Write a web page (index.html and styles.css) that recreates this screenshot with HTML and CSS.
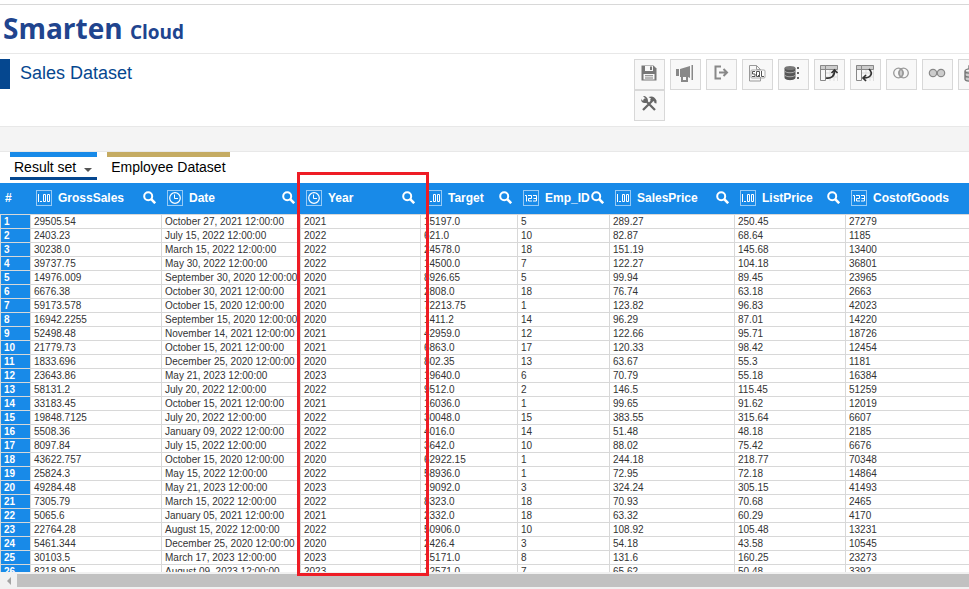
FILE: index.html
```html
<!DOCTYPE html>
<html lang="en">
<head>
<meta charset="utf-8">
<title>Smarten Cloud - Sales Dataset</title>
<link rel="stylesheet" href="styles.css">
</head>
<body>
<svg class="defs" aria-hidden="true">
  <symbol id="search" viewBox="0 0 13 13"><circle cx="5.2" cy="5.2" r="4" fill="none" stroke="currentColor" stroke-width="2"/><path d="M8.2 8.2l4 4" stroke="currentColor" stroke-width="2.6"/></symbol>
  <symbol id="decimal" viewBox="0 0 16 16"><g fill="none" stroke="currentColor"><rect x=".5" y=".5" width="15" height="15" stroke-opacity=".55"/><path d="M2.500 4v8M4 11.500h2M7.500 4.500h2v7h-2zM11.500 4.500h2v7h-2z"/></g></symbol>
  <symbol id="integer" viewBox="0 0 16 16"><g fill="none" stroke="currentColor"><rect x=".5" y=".5" width="15" height="15" stroke-opacity=".55"/><path d="M2 5.500h1.500v6M5 5.500h3.500v3h-3v2.500h3.500M10 5.500h3.500v5.500h-3.500M10.500 8.500h3"/></g></symbol>
  <symbol id="clock" viewBox="0 0 16 16"><g fill="none" stroke="currentColor"><rect x=".5" y=".5" width="15" height="15" stroke-opacity=".55"/><circle cx="8" cy="8" r="5.300" stroke-width="1.200"/><path d="M7.500 4.500v4h3.500"/></g></symbol>
</svg>
<header class="brand"><a class="logo" href="#">Smarten <span>Cloud</span></a></header>
<section class="titlebar">
  <h1>Sales Dataset</h1>
  <div class="toolbar">
    <button type="button" aria-label="Save"><svg viewBox="0 0 20 20"><path d="M2.500 2.500h12l3 3v12h-15z" fill="#777"/><path d="M6 3h8v5H6zM4.500 11h11v5.500h-11z" fill="#f8f8f8"/><path d="M11 3.500h2v3.500h-2zM6 12.200h8v1H6zM6 14.500h8v1H6z" fill="#777"/></svg></button>
    <button type="button" aria-label="Announce"><svg viewBox="0 0 20 20"><path d="M1 6h3v7H1zM5 6l10-3v12l-2-1v5H6v-5H5zM16.500 2H18v15h-1.500z" fill="#888"/><path d="M8 14h3v3H8z" fill="#f8f8f8"/></svg></button>
    <button type="button" aria-label="Export"><svg viewBox="0 0 20 20"><path d="M10 3.500H4.500v12H10M8 9.500h8M12.500 6l3.500 3.500-3.500 3.500" fill="none" stroke="#888" stroke-width="2"/></svg></button>
    <button type="button" aria-label="SQL"><svg viewBox="0 0 20 20"><path d="M2.500 18V2.500h7l4 4V18z" fill="none" stroke="#999"/><path d="M9.500 2.500v4h4" fill="none" stroke="#999"/><rect x="4" y="7" width="14" height="8" rx="1" fill="#fff" stroke="#aaa"/><path d="M8 8.500H5.500V11H8v2.500H5M9.500 8.500h3v5h-3zM11 12l2.500 2.500M14.500 8v5.500H17" fill="none" stroke="#555"/></svg></button>
    <button type="button" aria-label="Data source"><svg viewBox="0 0 20 20"><path d="M1.500 5v9.500c0 3.500 11 3.500 11 0V5z" fill="#555"/><ellipse cx="7" cy="5" rx="5.500" ry="2" fill="#777"/><path d="M1.500 7.500c0 3 11 3 11 0M1.500 11.500c0 3 11 3 11 0" fill="none" stroke="#aaa"/><path d="M14 5h3M14 10h3M14 15h3" stroke="#333" stroke-width="1.500" stroke-dasharray="2 1"/></svg></button>
    <button type="button" aria-label="Move rows up"><svg viewBox="0 0 20 20"><path d="M1 2h18v4H1z" fill="#ccc"/><path d="M7 10h12M7 14h12M11 6v12M15 6v12M18.500 6v12" stroke="#ddd"/><path d="M1.500 2.500h5v15h-5zM1.500 6.500h17M6.500 2.500h12v4" fill="none" stroke="#888"/><path d="M7 15c5 1 9-2 8.500-8M12.500 10l3-3 3 3" fill="none" stroke="#333" stroke-width="1.700"/></svg></button>
    <button type="button" aria-label="Move rows down"><svg viewBox="0 0 20 20"><path d="M1 2h18v4H1z" fill="#ccc"/><path d="M7 10h12M7 14h12M11 6v12M15 6v12M18.500 6v12" stroke="#ddd"/><path d="M1.500 2.500h5v15h-5zM1.500 6.500h17M6.500 2.500h12v4" fill="none" stroke="#888"/><path d="M14 6c5 5 1 9-5 9M11 12l-3 3 3 3" fill="none" stroke="#333" stroke-width="1.700"/></svg></button>
    <button type="button" aria-label="Join"><svg viewBox="0 0 20 20"><g fill="none" stroke="#999" stroke-width="1.300"><circle cx="7.500" cy="10" r="4.800"/><circle cx="12.500" cy="10" r="4.800"/><path d="M10 6c2.500 2 2.500 6 0 8-2.500-2-2.500-6 0-8z" fill="#ccc"/></g></svg></button>
    <button type="button" aria-label="Union"><svg viewBox="0 0 20 20"><g fill="#ccc" stroke="#888" stroke-width="1.200"><circle cx="6" cy="10" r="3.700"/><circle cx="14" cy="10" r="3.700"/></g></svg></button>
    <button type="button" aria-label="Load data"><svg viewBox="0 0 20 20"><path d="M2 8v8c0 3 13 3 13 0V8z" fill="#ccc"/><path d="M2 8v8c0 3 13 3 13 0V8M2 8c0 3 13 3 13 0s-13-3-13 0M2 12c0 3 13 3 13 0M6 6V3h4" fill="none" stroke="#777" stroke-width="1.400"/></svg></button>
    <button type="button" aria-label="Tools"><svg viewBox="0 0 20 20"><path d="M5 5l11 11M13 7L4 16" stroke="#666" stroke-width="2.300"/><path d="M4 2l2.500 2.500-1 1.500L3 6.500 2 4.500c0 4 2 5 5 4.500l2-2c0-3-2-5-5-5zM9.500 3c4-1.500 6 0 8 3.500v3l-2-.5-.5-2-2 1-2-2 1-1.500z" fill="#666"/></svg></button>
  </div>
</section>
<div class="strip"></div>
<nav class="tabs">
  <button type="button" class="tab active">Result set <i class="caret"></i></button>
  <button type="button" class="tab">Employee Dataset</button>
</nav>
<main class="grid">
  <div class="viewport">
  <table>
    <colgroup><col class="c-num"><col class="c-gross"><col class="c-date"><col class="c-year"><col class="c-target"><col class="c-emp"><col class="c-sales"><col class="c-list"><col class="c-cost"></colgroup>
    <thead><tr>
      <th>#</th>
      <th><div class="head"><svg><use href="#decimal"/></svg><span>GrossSales</span><button type="button" aria-label="Search GrossSales"><svg><use href="#search"/></svg></button></div></th>
      <th><div class="head"><svg><use href="#clock"/></svg><span>Date</span><button type="button" aria-label="Search Date"><svg><use href="#search"/></svg></button></div></th>
      <th><div class="head"><svg><use href="#clock"/></svg><span>Year</span><button type="button" aria-label="Search Year"><svg><use href="#search"/></svg></button></div></th>
      <th><div class="head"><svg><use href="#decimal"/></svg><span>Target</span><button type="button" aria-label="Search Target"><svg><use href="#search"/></svg></button></div></th>
      <th><div class="head"><svg><use href="#integer"/></svg><span>Emp_ID</span><button type="button" aria-label="Search Emp_ID"><svg><use href="#search"/></svg></button></div></th>
      <th><div class="head"><svg><use href="#decimal"/></svg><span>SalesPrice</span><button type="button" aria-label="Search SalesPrice"><svg><use href="#search"/></svg></button></div></th>
      <th><div class="head"><svg><use href="#decimal"/></svg><span>ListPrice</span><button type="button" aria-label="Search ListPrice"><svg><use href="#search"/></svg></button></div></th>
      <th><div class="head"><svg><use href="#integer"/></svg><span>CostofGoods</span></div></th>
    </tr></thead>
    <tbody>
      <tr><th>1<td>29505.54<td>October 27, 2021 12:00:00<td>2021<td>15197.0<td>5<td>289.27<td>250.45<td>27279
      <tr><th>2<td>2403.23<td>July 15, 2022 12:00:00<td>2022<td>621.0<td>10<td>82.87<td>68.64<td>1185
      <tr><th>3<td>30238.0<td>March 15, 2022 12:00:00<td>2022<td>24578.0<td>18<td>151.19<td>145.68<td>13400
      <tr><th>4<td>39737.75<td>May 30, 2022 12:00:00<td>2022<td>14500.0<td>7<td>122.27<td>104.18<td>36801
      <tr><th>5<td>14976.009<td>September 30, 2020 12:00:00<td>2020<td>8926.65<td>5<td>99.94<td>89.45<td>23965
      <tr><th>6<td>6676.38<td>October 30, 2021 12:00:00<td>2021<td>2808.0<td>18<td>76.74<td>63.18<td>2663
      <tr><th>7<td>59173.578<td>October 15, 2020 12:00:00<td>2020<td>72213.75<td>1<td>123.82<td>96.83<td>42023
      <tr><th>8<td>16942.2255<td>September 15, 2020 12:00:00<td>2020<td>1411.2<td>14<td>96.29<td>87.01<td>14220
      <tr><th>9<td>52498.48<td>November 14, 2021 12:00:00<td>2021<td>42959.0<td>12<td>122.66<td>95.71<td>18726
      <tr><th>10<td>21779.73<td>October 15, 2021 12:00:00<td>2021<td>6863.0<td>17<td>120.33<td>98.42<td>12454
      <tr><th>11<td>1833.696<td>December 25, 2020 12:00:00<td>2020<td>802.35<td>13<td>63.67<td>55.3<td>1181
      <tr><th>12<td>23643.86<td>May 21, 2023 12:00:00<td>2023<td>19640.0<td>6<td>70.79<td>55.18<td>16384
      <tr><th>13<td>58131.2<td>July 20, 2022 12:00:00<td>2022<td>9512.0<td>2<td>146.5<td>115.45<td>51259
      <tr><th>14<td>33183.45<td>October 15, 2021 12:00:00<td>2021<td>16036.0<td>1<td>99.65<td>91.62<td>12019
      <tr><th>15<td>19848.7125<td>July 20, 2022 12:00:00<td>2022<td>30048.0<td>15<td>383.55<td>315.64<td>6607
      <tr><th>16<td>5508.36<td>January 09, 2022 12:00:00<td>2022<td>4016.0<td>14<td>51.48<td>48.18<td>2185
      <tr><th>17<td>8097.84<td>July 15, 2022 12:00:00<td>2022<td>3642.0<td>10<td>88.02<td>75.42<td>6676
      <tr><th>18<td>43622.757<td>October 15, 2020 12:00:00<td>2020<td>62922.15<td>1<td>244.18<td>218.77<td>70348
      <tr><th>19<td>25824.3<td>May 15, 2022 12:00:00<td>2022<td>58936.0<td>1<td>72.95<td>72.18<td>14864
      <tr><th>20<td>49284.48<td>May 21, 2023 12:00:00<td>2023<td>19092.0<td>3<td>324.24<td>305.15<td>41493
      <tr><th>21<td>7305.79<td>March 15, 2022 12:00:00<td>2022<td>8323.0<td>18<td>70.93<td>70.68<td>2465
      <tr><th>22<td>5065.6<td>January 05, 2021 12:00:00<td>2021<td>2332.0<td>18<td>63.32<td>60.29<td>4170
      <tr><th>23<td>22764.28<td>August 15, 2022 12:00:00<td>2022<td>50906.0<td>10<td>108.92<td>105.48<td>13231
      <tr><th>24<td>5461.344<td>December 25, 2020 12:00:00<td>2020<td>2426.4<td>3<td>54.18<td>43.58<td>10545
      <tr><th>25<td>30103.5<td>March 17, 2023 12:00:00<td>2023<td>15171.0<td>8<td>131.6<td>160.25<td>23273
      <tr><th>26<td>8218.905<td>August 09, 2023 12:00:00<td>2023<td>12571.0<td>7<td>65.62<td>50.48<td>3392
    </tbody>
  </table>
  </div>
  <div class="scrollbar"><button type="button" aria-label="Scroll left"></button><div class="thumb"></div></div>
  <div class="highlight"></div>
</main>
</body>
</html>
```
FILE: styles.css
```css
* { box-sizing: border-box; }
body {
  margin: 0;
  height: 100vh;
  display: flex;
  flex-direction: column;
  overflow: hidden;
  background: #fff;
  color: #333;
  font-family: "Liberation Sans", Arial, sans-serif;
}
button { margin: 0; padding: 0; border: 0; background: none; font: inherit; color: inherit; }
svg { display: block; }
.defs { position: absolute; width: 0; height: 0; }

.brand {
  flex: none;
  height: 50px;
  margin-top: 4px;
  padding: 4px 3px;
  border-top: 1px solid #d8d8d8;
  border-bottom: 1px solid #e8e8e8;
}
.logo {
  color: #20448e;
  font: bold 28px/38px "Open Sans", "Noto Sans", sans-serif;
  text-decoration: none;
}
.logo span { font-size: 19px; }

.titlebar { flex: none; display: flex; justify-content: space-between; height: 72px; padding-top: 5px; }
h1 {
  height: 30px;
  margin: 0;
  padding-left: 10px;
  border-left: 10px solid #05478f;
  color: #05478f;
  font-size: 18px;
  line-height: 28px;
  font-weight: normal;
}
.toolbar { flex: none; display: flex; flex-wrap: wrap; align-content: flex-start; column-gap: 5px; width: 355px; margin-right: -20px; }
.toolbar button { display: flex; width: 31px; height: 31px; padding: 3px 4px; border: 1px solid #d8d8d8; background: #f8f8f8; }
.toolbar svg { flex: none; width: 20px; height: 20px; }

.strip { flex: none; height: 26px; background: #f4f4f4; border-top: 1px solid #e8e8e8; border-bottom: 1px solid #e8e8e8; }

.tabs { flex: none; display: flex; align-items: flex-start; gap: 10px; height: 31px; padding-left: 10px; }
.tab { padding: 0 4px 3px; border-top: 5px solid #c5ab62; color: #000; font-size: 14px; line-height: 20px; }
.tab.active { padding-bottom: 0; border-top-color: #188ae8; border-bottom: 3px solid #05478f; }
.caret { display: inline-block; margin-left: 4px; border: 4px solid transparent; border-top-color: #555; border-bottom: 0; }
.tab.active { padding-right: 5px; }

.grid { position: relative; flex: 1; min-height: 0; display: flex; flex-direction: column; }
.viewport { flex: 1; min-height: 0; overflow: hidden; }
table { width: 1000px; table-layout: fixed; border-collapse: separate; border-spacing: 0; font-size: 10px; }
.c-num { width: 31px; }
.c-gross { width: 131px; }
.c-date { width: 139px; }
.c-year { width: 120px; }
.c-target { width: 97px; }
.c-emp { width: 92px; }
.c-sales { width: 125px; }
.c-list { width: 111px; }
th, td { padding: 0 3px; text-align: left; white-space: nowrap; }
thead th { height: 32px; padding-bottom: 2px; border-bottom: 1px solid #d8d8d8; background: #188ae8; color: #fff; font-size: 12px; }
thead th:first-child { padding-left: 5px; }
.head { display: flex; align-items: center; padding: 0 3px 0 2px; }
.head svg { flex: none; width: 16px; height: 16px; }
.head span { margin-left: 6px; }
.head button { margin-left: auto; }
.head button svg { width: 13px; height: 13px; }
tbody tr { height: 14px; }
tbody th, tbody td { height: 14px; border-right: 1px solid #d8d8d8; border-bottom: 1px solid #d8d8d8; line-height: 13px; }
tbody th { border-left: 1px solid #d8d8d8; background: #188ae8; color: #fff; }

.scrollbar { flex: none; display: flex; height: 17px; padding: 2px 0; background: #f1f1f1; }
.scrollbar button { width: 17px; display: flex; align-items: center; justify-content: center; }
.scrollbar button::before { content: ""; border: 4px solid transparent; border-right-color: #a3a3a3; border-left: 0; }
.thumb { flex: 1; background: #c1c1c1; }

.highlight { position: absolute; left: 297px; top: -11px; width: 132px; bottom: 13px; border: 3px solid #ee1c25; }
```
